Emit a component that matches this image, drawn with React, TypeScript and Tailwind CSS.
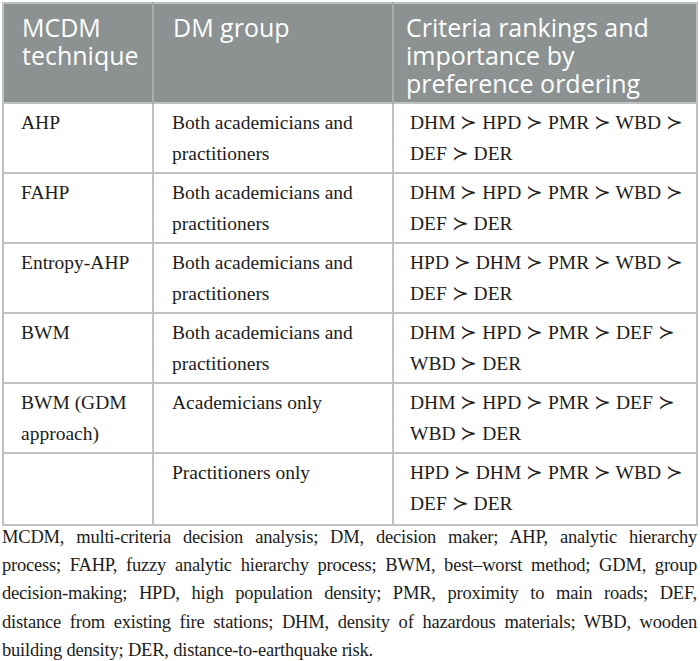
const rows: { tech: string[]; group: string; rank: string[] }[] = [
  { tech: ["AHP"], group: "Both academicians and practitioners", rank: ["DHM ≻ HPD ≻ PMR ≻ WBD ≻", "DEF ≻ DER"] },
  { tech: ["FAHP"], group: "Both academicians and practitioners", rank: ["DHM ≻ HPD ≻ PMR ≻ WBD ≻", "DEF ≻ DER"] },
  { tech: ["Entropy-AHP"], group: "Both academicians and practitioners", rank: ["HPD ≻ DHM ≻ PMR ≻ WBD ≻", "DEF ≻ DER"] },
  { tech: ["BWM"], group: "Both academicians and practitioners", rank: ["DHM ≻ HPD ≻ PMR ≻ DEF ≻", "WBD ≻ DER"] },
  { tech: ["BWM (GDM", "approach)"], group: "Academicians only", rank: ["DHM ≻ HPD ≻ PMR ≻ DEF ≻", "WBD ≻ DER"] },
  { tech: [], group: "Practitioners only", rank: ["HPD ≻ DHM ≻ PMR ≻ WBD ≻", "DEF ≻ DER"] },
]

const footLines = [
  "MCDM, multi-criteria decision analysis; DM, decision maker; AHP, analytic hierarchy",
  "process; FAHP, fuzzy analytic hierarchy process; BWM, best–worst method; GDM, group",
  "decision-making; HPD, high population density; PMR, proximity to main roads; DEF,",
  "distance from existing fire stations; DHM, density of hazardous materials; WBD, wooden",
]

const App = () => {
  return (
    <div className="h-[661px] w-[700px] overflow-hidden bg-white pl-[2px] pt-[2px]">
      <table className="w-[696px] table-fixed border-collapse border-2 border-[#c0c2c2]">
        <colgroup>
          <col className="w-[150px]" />
          <col className="w-[240px]" />
          <col />
        </colgroup>
        <thead>
          <tr className="h-[100px] bg-[#8c9192] align-top font-['Open_Sans',sans-serif] text-[25px] leading-[28px] text-white">
            <th className="border-r-2 border-[#a7abab] pt-[9px] pl-[18px] text-left font-normal">
              MCDM
              <br />
              technique
            </th>
            <th className="border-r-2 border-[#a7abab] pt-[9px] pl-[19px] text-left font-normal">DM group</th>
            <th className="pt-[9px] pl-[12px] text-left font-normal">
              Criteria rankings and
              <br />
              importance by
              <br />
              preference ordering
            </th>
          </tr>
        </thead>
        <tbody className="font-['Liberation_Serif',serif] text-[19.5px] leading-[31px] text-[#1c1c1c]">
          {rows.map((r, i) => (
            <tr key={i} className={i === rows.length - 1 ? "h-[72px] align-top" : "h-[70px] align-top"}>
              <td className="border-2 border-[#c0c2c2] pt-[3px] pl-[17px]">
                {r.tech.map((t, j) => (
                  <div key={j}>{t}</div>
                ))}
              </td>
              <td className="border-2 border-[#c0c2c2] pt-[3px] pl-[18px] pr-[10px]">{r.group}</td>
              <td className="border-2 border-[#c0c2c2] pt-[3px] pl-[16px]">
                {r.rank.map((t, j) => (
                  <div key={j} className="whitespace-nowrap">
                    {t}
                  </div>
                ))}
              </td>
            </tr>
          ))}
        </tbody>
      </table>
      <div className="-mt-[3px] w-[695px] font-['Liberation_Serif',serif] text-[18.5px] leading-[28.2px] tracking-[-0.2px] text-[#1c1c1c]">
        {footLines.map((l, i) => (
          <div key={i} className="whitespace-nowrap text-justify [text-align-last:justify]">
            {l}
          </div>
        ))}
        <div className="whitespace-nowrap">building density; DER, distance-to-earthquake risk.</div>
      </div>
    </div>
  )
}

export default App
